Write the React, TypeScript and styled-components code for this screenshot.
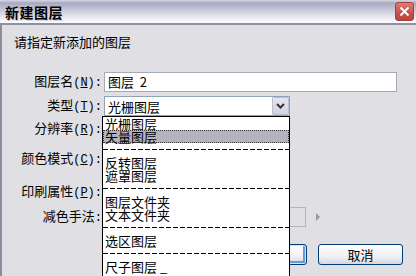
import styled, { createGlobalStyle } from "styled-components";

const Global = createGlobalStyle`
    html, body {
        margin: 0;
        padding: 0;
        background: #dfdfe4;
    }
    body {
        font-family: "Noto Sans CJK SC", "Liberation Sans", sans-serif;
        font-size: 13px;
        color: #000;
    }
`
const Window = styled.div`
    width: 416px;
    height: 276px;
    overflow: hidden;
    display: flex;
    flex-direction: column;
    background: #dfdfe4;
`
const TitleBar = styled.div`
    height: 25px;
    flex-shrink: 0;
    display: flex;
    align-items: center;
    justify-content: space-between;
    padding: 0 2px 0 5px;
    box-sizing: border-box;
    background: linear-gradient(#d8d8e2 0px, #a9a9c2 3px, #c8c8d8 10px, #f4f4f8 20px, #ffffff 24px);
    border-bottom: 2px solid #8f8fa6;
`
const Title = styled.span`
    font-size: 14px;
    font-weight: bold;
    letter-spacing: 0.5px;
    color: #000;
    text-shadow: 1px 1px 0 #c8c8d4;
`
const CloseButton = styled.div`
    width: 19px;
    height: 19px;
    box-sizing: border-box;
    border-radius: 3px;
    border: 1px solid #a8403c;
    background: linear-gradient(#e07a74, #c9504a 60%, #b8443f);
    display: flex;
    align-items: center;
    justify-content: center;
`
const Body = styled.div`
    flex: 1;
    position: relative;
    border-left: 2px solid #8c8c9c;
    padding: 9px 0 0 12px;
`
const Prompt = styled.div`
    line-height: 15px;
`
const Form = styled.div`
    margin-top: 22px;
    display: flex;
    flex-direction: column;
`
const Row = styled.div<{ $mt: number }>`
    display: grid;
    grid-template-columns: 88px auto;
    column-gap: 2px;
    align-items: center;
    height: 20px;
    margin-top: ${p => p.$mt}px;
`
const Label = styled.label`
    text-align: right;
    line-height: 20px;
    white-space: nowrap;
`
const Ascii = styled.span`
    font-family: "Liberation Mono", monospace;
    font-size: 12px;
`
const TextBox = styled.div<{ $w: number; $disabled?: boolean }>`
    width: ${p => p.$w}px;
    height: 20px;
    box-sizing: border-box;
    border: 1px solid ${p => p.$disabled ? "#b4b4bc" : "#a5abb3"};
    background: ${p => p.$disabled ? "transparent" : "#fff"};
    padding-left: 3px;
    line-height: 18px;
    display: flex;
    align-items: center;
`
const FieldWrap = styled.div`
    display: flex;
    align-items: center;
    gap: 10px;
`
const Arrow = styled.div`
    width: 0;
    height: 0;
    border-top: 4px solid transparent;
    border-bottom: 4px solid transparent;
    border-left: 4px solid #9a9aa6;
`
const Select = styled.div`
    position: relative;
    width: 186px;
    height: 20px;
    box-sizing: border-box;
    border: 1px solid #8fa2b8;
    background: #fff;
    display: flex;
    align-items: center;
    justify-content: space-between;
    padding-left: 3px;
`
const SelectButton = styled.div`
    width: 17px;
    height: 18px;
    box-sizing: border-box;
    border: 1px solid #b8c0d0;
    border-radius: 1px;
    background: linear-gradient(#e4e4ee, #d4d4e0);
    display: flex;
    align-items: center;
    justify-content: center;
`
const List = styled.div`
    position: absolute;
    top: 19px;
    left: -3px;
    width: 188px;
    height: 200px;
    box-sizing: border-box;
    border: 1px solid #000;
    border-bottom: none;
    background: #fff;
    display: flex;
    flex-direction: column;
    z-index: 5;
`
const Item = styled.div<{ $active?: boolean }>`
    height: 13px;
    line-height: 13px;
    padding-left: 2px;
    box-sizing: border-box;
    white-space: nowrap;
    background: ${p => p.$active ? "#b2b3be" : "transparent"};
    outline: ${p => p.$active ? "1px dotted #333" : "none"};
    outline-offset: -1px;
`
const Separator = styled.div`
    height: 13px;
    flex-shrink: 0;
    display: flex;
    align-items: center;
    &::after {
        content: "";
        display: block;
        width: 100%;
        height: 1px;
        margin-top: -1px;
        background: repeating-linear-gradient(to right, #000 0 5px, transparent 5px 7px);
    }
`
const Buttons = styled.div`
    display: flex;
    justify-content: flex-end;
    gap: 11px;
    margin-top: 18px;
    padding-right: 13px;
`
const Button = styled.div<{ $default?: boolean }>`
    width: 85px;
    height: 21px;
    box-sizing: border-box;
    border: 1px solid #003c74;
    border-radius: 3px;
    background: linear-gradient(#ffffff, #f0f0f4 60%, #d6d6e2);
    box-shadow: ${p => p.$default ? "inset 0 0 0 1px #cee7ff, inset -1px -1px 0 2px #6c95e0" : "none"};
    display: flex;
    align-items: center;
    justify-content: center;
    line-height: 19px;
`

const Chevron = () => (
    <svg width="9" height="6" viewBox="0 0 9 6">
        <path d="M1 1 L4.5 4.5 L8 1" stroke="#333" strokeWidth="2" fill="none" />
    </svg>
)

const CloseX = () => (
    <svg width="11" height="11" viewBox="0 0 11 11">
        <path d="M1.5 1.5 L9.5 9.5 M9.5 1.5 L1.5 9.5" stroke="#fff" strokeWidth="1.8" />
    </svg>
)

const items: (string | null)[] = [
    "光栅图层", "矢量图层", null, "反转图层", "遮罩图层", null,
    "图层文件夹", "文本文件夹", null, "选区图层", null, "尺子图层 _",
]

const App = () => {
    return (
        <Window>
            <Global />
            <TitleBar>
                <Title>新建图层</Title>
                <CloseButton><CloseX /></CloseButton>
            </TitleBar>
            <Body>
                <Prompt>请指定新添加的图层</Prompt>
                <Form>
                    <Row $mt={0}>
                        <Label>图层名<Ascii>(<u>N</u>): </Ascii></Label>
                        <TextBox $w={293}>图层&nbsp;&nbsp;2</TextBox>
                    </Row>
                    <Row $mt={4}>
                        <Label>类型<Ascii>(<u>T</u>): </Ascii></Label>
                        <Select>
                            <span>光栅图层</span>
                            <SelectButton><Chevron /></SelectButton>
                            <List>
                                {items.map((it, i) => it === null
                                    ? <Separator key={i} />
                                    : <Item key={i} $active={i === 1}>{it}</Item>)}
                            </List>
                        </Select>
                    </Row>
                    <Row $mt={3}>
                        <Label>分辨率<Ascii>(<u>R</u>): </Ascii></Label>
                        <TextBox $w={120} />
                    </Row>
                    <Row $mt={10}>
                        <Label>颜色模式<Ascii>(<u>C</u>): </Ascii></Label>
                        <TextBox $w={120} />
                    </Row>
                    <Row $mt={13}>
                        <Label>印刷属性<Ascii>(<u>P</u>): </Ascii></Label>
                        <TextBox $w={120} />
                    </Row>
                    <Row $mt={5}>
                        <Label>减色手法<Ascii>: </Ascii></Label>
                        <FieldWrap>
                            <TextBox $w={202} $disabled />
                            <Arrow />
                        </FieldWrap>
                    </Row>
                </Form>
                <Buttons>
                    <Button $default>确定</Button>
                    <Button>取消</Button>
                </Buttons>
            </Body>
        </Window>
    )
}

export default App;
